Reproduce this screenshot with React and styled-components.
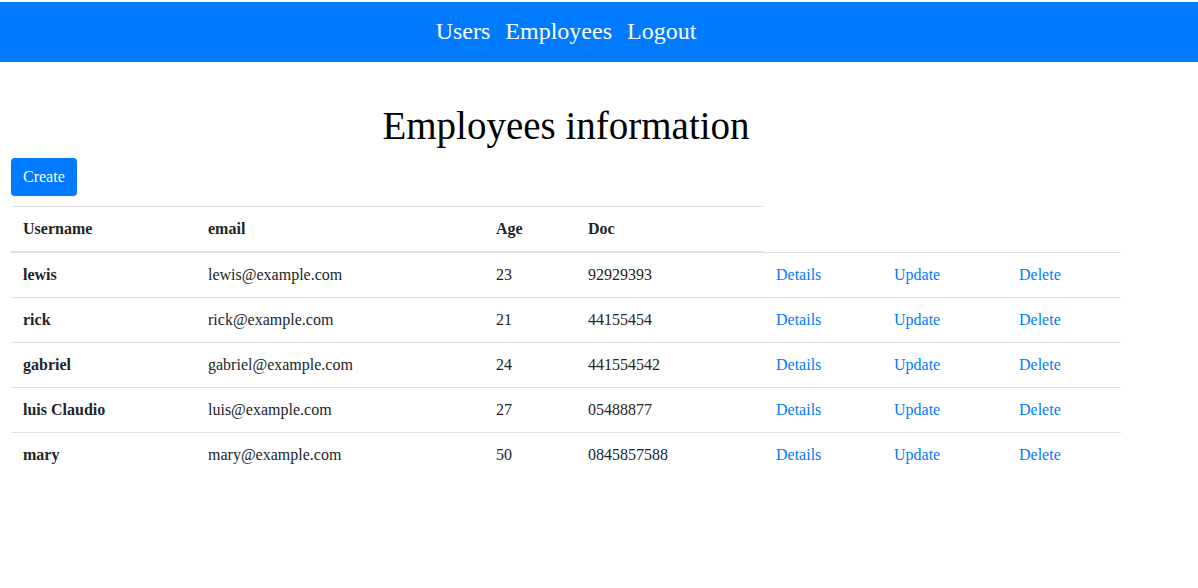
import styled, { createGlobalStyle } from "styled-components";

const GlobalStyle = createGlobalStyle`
  body {
    margin: 0;
    font-family: "Liberation Serif", "Times New Roman", serif;
    font-size: 16px;
    color: #212529;
    background: #fff;
  }
`;

const employees = [
  { name: "lewis", email: "lewis@example.com", age: 23, doc: "92929393" },
  { name: "rick", email: "rick@example.com", age: 21, doc: "44155454" },
  { name: "gabriel", email: "gabriel@example.com", age: 24, doc: "441554542" },
  { name: "luis Claudio", email: "luis@example.com", age: 27, doc: "05488877" },
  { name: "mary", email: "mary@example.com", age: 50, doc: "0845857588" },
];

export default function App() {
  return (
    <>
      <GlobalStyle />
      <NavBar>
        <NavInner>
          <NavLink href="#">Users</NavLink>
          <NavLink href="#">Employees</NavLink>
          <NavLink href="#">Logout</NavLink>
        </NavInner>
      </NavBar>
      <Container>
        <Title>Employees information</Title>
        <CreateButton>Create</CreateButton>
        <Table>
          <colgroup>
            <col style={{ width: 185 }} />
            <col style={{ width: 288 }} />
            <col style={{ width: 92 }} />
            <col style={{ width: 188 }} />
            <col style={{ width: 118 }} />
            <col style={{ width: 125 }} />
            <col style={{ width: 114 }} />
          </colgroup>
          <thead>
            <tr>
              <HeadCell>Username</HeadCell>
              <HeadCell>email</HeadCell>
              <HeadCell>Age</HeadCell>
              <HeadCell>Doc</HeadCell>
            </tr>
          </thead>
          <tbody>
            {employees.map((e) => (
              <tr key={e.name}>
                <Cell as="th" scope="row" $bold>
                  {e.name}
                </Cell>
                <Cell>{e.email}</Cell>
                <Cell>{e.age}</Cell>
                <Cell>{e.doc}</Cell>
                <Cell>
                  <ActionLink href="#">Details</ActionLink>
                </Cell>
                <Cell>
                  <ActionLink href="#">Update</ActionLink>
                </Cell>
                <Cell>
                  <ActionLink href="#">Delete</ActionLink>
                </Cell>
              </tr>
            ))}
          </tbody>
        </Table>
      </Container>
    </>
  );
}

const NavBar = styled.nav`
  margin-top: 2px;
  height: 60px;
  background-color: #007bff;
  display: flex;
  align-items: center;
`;

const NavInner = styled.div`
  width: 1110px;
  margin-left: 11px;
  display: flex;
  justify-content: center;
  gap: 15px;
`;

const NavLink = styled.a`
  color: #fff;
  font-size: 24px;
  text-decoration: none;
  line-height: 1;
  margin-top: -2px;
`;

const Container = styled.div`
  width: 1110px;
  margin-left: 11px;
`;

const Title = styled.h1`
  margin: 0;
  padding-top: 40px;
  height: 56px;
  text-align: center;
  font-size: 39px;
  font-weight: 500;
  line-height: 48px;
  color: #000;
`;

const CreateButton = styled.button`
  display: block;
  height: 38px;
  padding: 0 12px;
  border: none;
  border-radius: 4px;
  background-color: #007bff;
  color: #fff;
  font-family: inherit;
  font-size: 16px;
  cursor: pointer;
`;

const Table = styled.table`
  margin-top: 10px;
  width: 1110px;
  border-collapse: collapse;
  table-layout: fixed;
`;

const HeadCell = styled.th`
  padding: 12px;
  line-height: 20px;
  text-align: left;
  font-weight: bold;
  border-top: 1px solid #dee2e6;
  border-bottom: 2px solid #dee2e6;
`;

const Cell = styled.td`
  padding: 12px;
  line-height: 20px;
  text-align: left;
  font-weight: ${(p) => (p.$bold ? "bold" : "normal")};
  border-top: 1px solid #dee2e6;
  white-space: nowrap;
`;

const ActionLink = styled.a`
  color: #007bff;
  text-decoration: none;
`;
